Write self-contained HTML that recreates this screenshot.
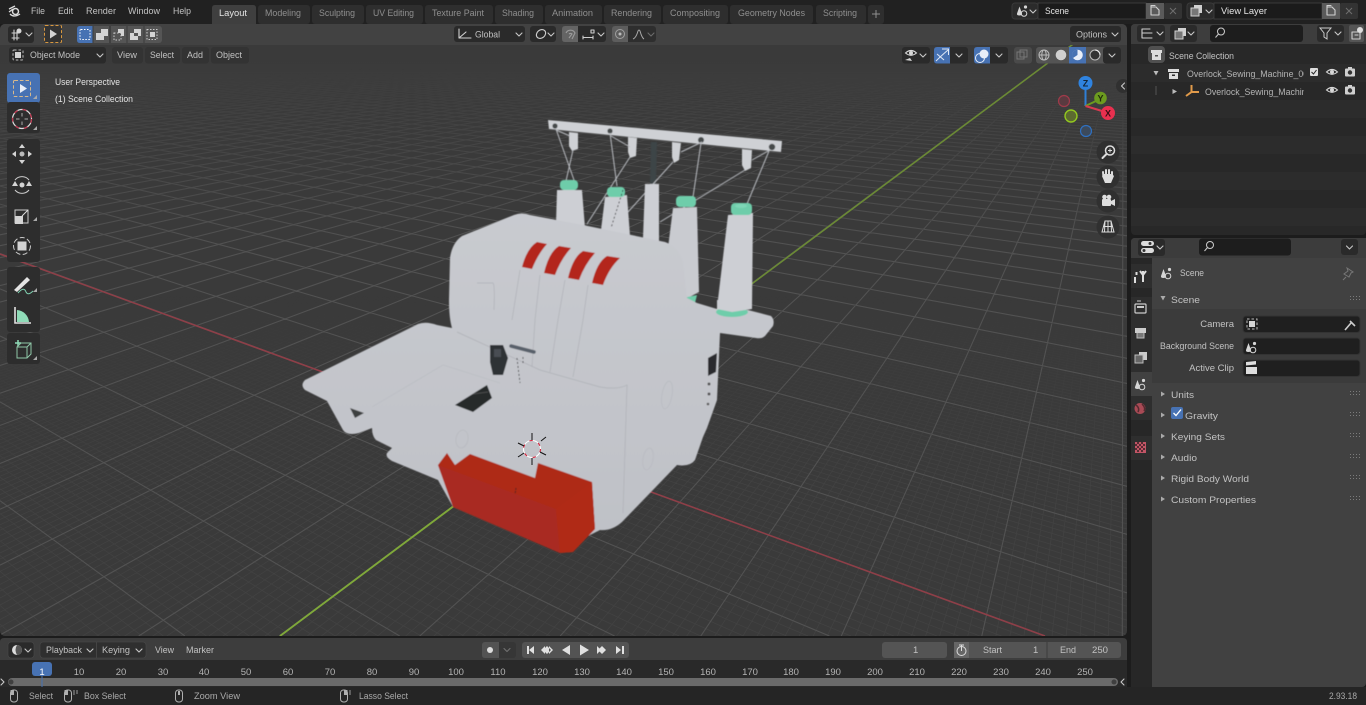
<!DOCTYPE html>
<html><head><meta charset="utf-8"><title>Blender</title>
<style>
html,body{margin:0;padding:0;background:#1c1c1c;width:1366px;height:705px;overflow:hidden}
svg{display:block;overflow:hidden}
svg.root{position:absolute;left:0;top:0}
text{font-family:"Liberation Sans",sans-serif;font-size:9.5px;fill:#c2c2c2}
.w{fill:#e4e4e4}.d{fill:#8f8f8f}.n{fill:#b4b4b4;text-anchor:middle;font-size:9.5px}
.i{fill:none;stroke:#d0d0d0;stroke-width:1.1;stroke-linecap:round;stroke-linejoin:round}
.f{fill:#d4d4d4;stroke:none}
.c{fill:none;stroke:#c8c8c8;stroke-width:1.1;stroke-linecap:round;stroke-linejoin:round}
.seam{fill:none;stroke:#aeb0b6;stroke-width:.7}
.thr{stroke:#b9bcc1;stroke-width:1;fill:none}
</style></head><body>
<svg class="root" width="1366" height="705" viewBox="0 0 1366 705" xmlns="http://www.w3.org/2000/svg">
<defs>
<path id="ch" d="M-3,-1.5 L0,1.5 L3,-1.5" class="c"/>
<g id="eye"><path d="M-5.5,0 Q0,-5 5.5,0 Q0,4.5 -5.5,0Z" fill="none" stroke="#d8d8d8" stroke-width="1.1"/><circle r="2" fill="#d8d8d8"/></g>
<g id="cam"><rect x="-5" y="-3.5" width="10" height="8" rx="1" fill="#d0d0d0"/><rect x="-2" y="-5" width="4" height="2" fill="#d0d0d0"/><circle cy="0.5" r="2.2" fill="#333"/></g>
<g id="scn"><path d="M-5,3 L-2.5,-4 L0,3Z M-5,3 Q-5.5,5 -2.5,5 Q0,5 0,3Z" fill="#d6d6d6"/><circle cx="2" cy="3" r="2.8" fill="none" stroke="#d6d6d6"/><circle cx="3.5" cy="-3.5" r="1.6" fill="#d6d6d6"/></g>
<g id="mouse"><rect x="-3.5" y="-6" width="7" height="12" rx="3" fill="none" stroke="#b0b0b0" stroke-width="1"/></g>
<g id="dots" fill="#7c7c7c"><rect x="0" y="0" width="1" height="1"/><rect x="3" y="0" width="1" height="1"/><rect x="6" y="0" width="1" height="1"/><rect x="9" y="0" width="1" height="1"/><rect x="0" y="3" width="1" height="1"/><rect x="3" y="3" width="1" height="1"/><rect x="6" y="3" width="1" height="1"/><rect x="9" y="3" width="1" height="1"/></g>
<clipPath id="vp"><rect x="0" y="24" width="1127" height="612" rx="5"/></clipPath>
<linearGradient id="fm" x1="0" y1="0" x2="0" y2="705" gradientUnits="userSpaceOnUse"><stop offset=".42" stop-color="#000"/><stop offset=".68" stop-color="#fff"/></linearGradient>
<linearGradient id="mm" x1="0" y1="0" x2="0" y2="705" gradientUnits="userSpaceOnUse"><stop offset=".08" stop-color="#000"/><stop offset=".35" stop-color="#fff"/></linearGradient>
<mask id="fmask" maskUnits="userSpaceOnUse" x="0" y="0" width="1366" height="705"><rect width="1366" height="705" fill="url(#fm)"/></mask>
<mask id="mmask" maskUnits="userSpaceOnUse" x="0" y="0" width="1366" height="705"><rect width="1366" height="705" fill="url(#mm)"/></mask>
<linearGradient id="body" x1="0" y1="200" x2="0" y2="530" gradientUnits="userSpaceOnUse"><stop offset="0" stop-color="#c9cbd0"/><stop offset="1" stop-color="#bfc1c7"/></linearGradient>
<filter id="soft" x="-5%" y="-5%" width="110%" height="110%"><feGaussianBlur stdDeviation=".5"/></filter>
</defs>

<rect width="1366" height="705" fill="#1c1c1c"/>
<rect width="1366" height="24" fill="#212121"/>
<rect y="687" width="1366" height="18" fill="#252525"/>

<!-- viewport -->
<g clip-path="url(#vp)">
<rect x="0" y="24" width="1127" height="612" fill="#3a3a3a"/>
<g mask="url(#fmask)"><g id="fine" stroke="#424242" stroke-width=".8" fill="none"></g></g>
<g mask="url(#mmask)"><g id="major" stroke="#525252" stroke-width="1.1" fill="none"></g></g>
<line x1="0" y1="254" x2="1045" y2="636" stroke="#8e3f48" stroke-width="1.6"/>
<line x1="280" y1="636" x2="1100" y2="24" stroke="#6b8a35" stroke-width="1.6"/>
<path d="M280,636 L455,505" stroke="#7fa83a" stroke-width="1.8"/>
<rect x="0" y="24" width="1127" height="21" fill="#424242"/>

<!-- machine -->
<g filter="url(#soft)">
<!-- rack -->
<polygon points="548,120 782,141 781,152 549,129" fill="#cfd1d5"/>
<polygon points="569,132 578,133 578,149 572,151 569,146" fill="#cfd1d5"/>
<polygon points="628,137 637,138 636,156 630,158 628,152" fill="#cfd1d5"/>
<polygon points="672,142 681,143 679,160 674,163 672,157" fill="#cfd1d5"/>
<polygon points="742,149 752,150 751,168 745,171 742,165" fill="#cfd1d5"/>
<circle cx="555" cy="126" r="2.6" fill="#44484a"/><circle cx="610" cy="131" r="2.6" fill="#44484a"/><circle cx="701" cy="140" r="3" fill="#44484a"/><circle cx="772" cy="147" r="3.2" fill="#44484a"/>
<polygon points="651,142 657,142 656,184 650,184" fill="#3c4546"/>
<path class="thr" d="M556,129 L574,180 M573,150 L566,181 M610,133 L617,186 M611,136 L630,147 M630,157 L587,224 M673,162 L628,212 M702,142 L681,152 M701,143 L693,197 M745,170 L660,222 M769,151 L747,204 M770,150 L752,160 M556,130 L570,136"/>
<!-- rear spools -->
<polygon points="557,190 582,190 585,228 556,224" fill="#cdcfd4"/>
<polygon points="605,197 627,195 630,236 601,230" fill="#cdcfd4"/>
<polygon points="645,184 659,184 659,244 643,238" fill="#cdcfd4"/>
<polygon points="673,208 697,207 699,292 684,300 668,248" fill="#c9cbd0"/>
<rect x="560" y="180" width="18" height="10" rx="4" fill="#6ecdaa"/>
<rect x="607" y="187" width="18" height="10" rx="4" fill="#6ecdaa"/>
<rect x="676" y="196" width="20" height="11" rx="4" fill="#6ecdaa"/>
<polygon points="683,298 697,295 695,303 683,305" fill="#6ecdaa"/>
<!-- main silhouette -->
<path d="M418,324 Q426,321 437,325 L452,328 Q449,318 449,300 L450,258 Q452,243 462,236 L514,215 Q522,212 530,215 L583,225 L665,242 Q679,247 683,262 L687,298 L697,303 L717,309 L748,310 L771,316 Q775,320 773,326 L765,336 Q762,339 756,338 L720,333 L717,400 L707,428 L703,437 L695,460 Q690,467 677,465 L622,522 Q612,531 600,530 L580,540 L453,507 L438,480 L392,461 Q385,457 387,453 L392,448 L376,440 Q372,436 372,428 L359,433 Q347,436 343,430 L327,401 L305,390 Q300,385 305,380Z" fill="url(#body)"/>
<path class="seam" d="M457,332 L540,370 L600,387 Q618,390 627,385 L623,513 M520,270 L512,320 M540,275 L535,320 L532,367 M565,280 L558,320 L550,372 M588,285 L583,320 L573,377 M477,283 L493,283 Q495,285 494,310"/>
<path d="M372,407 L443,365 L500,383" fill="none" stroke="#b8bac0" stroke-width=".6"/>
<ellipse cx="667" cy="395" rx="5" ry="14" fill="none" stroke="#b6b8be" stroke-width=".6" transform="rotate(10 667 395)"/>
<ellipse cx="648" cy="459" rx="5" ry="11" fill="none" stroke="#b6b8be" stroke-width=".6" transform="rotate(10 648 459)"/>
<ellipse cx="462" cy="439" rx="6" ry="9" fill="none" stroke="#b6b8be" stroke-width=".6" transform="rotate(10 462 439)"/>
<polygon points="350,408 364,413 355,418" fill="#3e3f40"/>
<!-- front spool -->
<polygon points="728,215 753,213 752,308 717,308" fill="#cdcfd4"/>
<ellipse cx="732" cy="312" rx="16" ry="5" fill="#6ecdaa"/>
<polygon points="717,300 752,300 752,309 732,312 717,309" fill="#cdcfd4"/>
<rect x="731" y="203" width="21" height="12" rx="4" fill="#6ecdaa"/>
<ellipse cx="741" cy="206" rx="6" ry="2" fill="#7ed6b6"/>
<!-- red tension -->
<g fill="#b3281a">
<path d="M522,267 L532,269 Q538,254 547,244 L537,242 Q527,248 522,267Z"/>
<path d="M544,273 L555,275 Q561,259 571,248 L559,246 Q549,252 544,273Z"/>
<path d="M568,278 L579,280 Q585,264 595,253 L583,251 Q573,257 568,278Z"/>
<path d="M592,283 L603,285 Q609,268 620,258 L607,256 Q597,262 592,283Z"/>
</g>
<!-- dark parts -->
<polygon points="490,345 503,345 508,358 503,375 493,375 490,362" fill="#2e3234"/>
<rect x="494" y="349" width="7" height="8" fill="#4a4e52"/>
<line x1="511" y1="346" x2="534" y2="352" stroke="#59606a" stroke-width="3.5" stroke-linecap="round"/>
<polygon points="455,405 487,385 492,398 473,412" fill="#25292a"/>
<line x1="473" y1="394" x2="488" y2="392" stroke="#555" stroke-width=".8"/>
<polygon points="708,358 717,353 716,372 708,376" fill="#2a2b2d"/>
<circle cx="709" cy="384" r="1.5" fill="#555"/><circle cx="709" cy="394" r="1.5" fill="#555"/><circle cx="708" cy="404" r="1.3" fill="#555"/>
<path d="M517,358 L520,383 M523,357 L523,363" stroke="#222" stroke-width=".8" stroke-dasharray="2 2" fill="none"/>
<path d="M623,190 L611,228" stroke="#222" stroke-width=".8" stroke-dasharray="2 2" fill="none"/>
<!-- red tray -->
<polygon points="438,465 447,453 455,465 470,454 535,478 538,463 592,482 595,529 573,552 560,553 453,507" fill="#ae2a18"/>
<polygon points="438,465 556,509 560,553 453,507" fill="#a92b20"/>
<polygon points="556,509 592,482 595,529 573,552 560,553" fill="#b02a19"/>
<line x1="516" y1="488" x2="515" y2="494" stroke="#222" stroke-width=".8" stroke-dasharray="2 1"/>
</g>
<!-- 3d cursor -->
<circle cx="532" cy="449" r="8.5" fill="none" stroke="#fff" stroke-width="1.1"/>
<circle cx="532" cy="449" r="8.5" fill="none" stroke="#d6213a" stroke-width="1.1" stroke-dasharray="3.3 6"/>
<path d="M532,433 L532,440 M532,458 L532,465 M518,443 L524,446 M540,452 L546,455 M541,441 L546,437 M518,457 L524,453" stroke="#111" stroke-width="1" fill="none"/>

<!-- gizmo -->
<path d="M1085.5,106 L1085.5,90" stroke="#2f7fd6" stroke-width="2"/>
<path d="M1085.5,106 L1096,101" stroke="#6c9b1f" stroke-width="2"/>
<path d="M1085.5,106 L1102,111" stroke="#d93a50" stroke-width="2"/>
<circle cx="1064" cy="101" r="5.5" fill="#5a3a40" stroke="#a03a4a" stroke-width="1.2"/>
<circle cx="1071" cy="116" r="6" fill="#5c6a30" stroke="#93c81f" stroke-width="1.4"/>
<circle cx="1086" cy="131" r="5.5" fill="#3c4a5c" stroke="#2f70c0" stroke-width="1.2"/>
<circle cx="1085.5" cy="83" r="7" fill="#2f83e0"/><text x="1085.5" y="86.5" text-anchor="middle" style="font-weight:bold;font-size:9px;fill:#12263a">Z</text>
<circle cx="1100.5" cy="98" r="6.3" fill="#6c9b1f"/><text x="1100.5" y="101.5" text-anchor="middle" style="font-weight:bold;font-size:9px;fill:#1d2a0a">Y</text>
<circle cx="1108" cy="113" r="7" fill="#e8304f"/><text x="1108" y="116.5" text-anchor="middle" style="font-weight:bold;font-size:9px;fill:#3a0c14">X</text>
<!-- nav buttons -->
<g fill="#303030"><circle cx="1108" cy="152" r="11.5"/><circle cx="1108" cy="177" r="11.5"/><circle cx="1108" cy="201" r="11.5"/><circle cx="1108" cy="227" r="11.5"/><circle cx="1123" cy="86" r="7"/></g>
<path d="M1124.5,83 L1121.5,86 L1124.5,89" class="c"/>
<circle cx="1110" cy="150.500" r="4.500" fill="none" stroke="#ddd" stroke-width="1.500"/><path d="M1106.500,154 L1102.500,158" stroke="#ddd" stroke-width="2" stroke-linecap="round"/><path d="M1108,150.500 H1112 M1110,148.500 V152.500" stroke="#ddd"/>
<path d="M1103.500,177 L1103,172 M1106,175 L1106,170 M1109,175 L1109,170 M1112,176 L1112,172" stroke="#ddd" stroke-width="2" stroke-linecap="round"/><path d="M1102,176 L1105,183 H1111 L1114,176 L1112,174 H1104Z" fill="#ddd"/>
<rect x="1102" y="199" width="9" height="7" rx="1" fill="#ddd"/><circle cx="1104.500" cy="197" r="2.300" fill="#ddd"/><circle cx="1109" cy="197" r="2.300" fill="#ddd"/><path d="M1111,201 L1115,199 V206 L1111,204Z" fill="#ddd"/>
<path d="M1105,221 H1111 L1114,232 H1102Z M1103.500,226.500 H1112.500 M1108,221 V232 M1105,221 L1104.500,232 M1111,221 L1111.500,232" fill="none" stroke="#ddd"/>

<!-- Header row 1 viewport -->
<rect x="8" y="26" width="26" height="17" rx="3" fill="#2a2a2a"/>
<path d="M12,33 H19 M12,38 H19 M14,30 V40 M17,31 V40" class="i"/><circle cx="19" cy="31" r="2.500" class="f"/><use href="#ch" x="29" y="34.500"/>
<rect x="44.500" y="25.500" width="17" height="17" rx="1" fill="#333" stroke="#d9983f" stroke-width="1" stroke-dasharray="3 2"/>
<path d="M50,29.500 L57,34 L50,38.500Z" class="f"/>
<rect x="77" y="26" width="85" height="17" rx="3" fill="#555"/>
<path d="M80,26 H93 V43 H80 Q77,43 77,40 V29 Q77,26 80,26Z" fill="#4772b3"/>
<line x1="110" y1="26" x2="110" y2="43" stroke="#2a2a2a"/><line x1="127" y1="26" x2="127" y2="43" stroke="#3a3a3a"/><line x1="144" y1="26" x2="144" y2="43" stroke="#3a3a3a"/><line x1="93" y1="26" x2="93" y2="43" stroke="#3a3a3a"/>
<rect x="80" y="29.500" width="10" height="10" rx="1" fill="none" stroke="#fff" stroke-dasharray="1.500 1.500"/>
<path d="M101,29 H108 V36 H104 V40 H96 V33 H101Z" class="f"/>
<rect x="114" y="33" width="7" height="7" fill="none" stroke="#ccc" stroke-dasharray="1.500 1.500"/><path d="M118,29 H124 V36 H121 V33 H118Z" class="f"/>
<path d="M134,29 H141 V36 H138 V33 H134Z M130,33 H134 V36 H138 V40 H130Z" class="f"/>
<rect x="147" y="29.500" width="10" height="10" fill="none" stroke="#ccc" stroke-dasharray="1.500 1.500"/><rect x="150" y="32" width="5" height="5" class="f"/>

<!-- global etc -->
<rect x="454" y="26" width="71" height="16" rx="3" fill="#2a2a2a"/>
<path d="M459,29 V38 H471 M459,38 L466,32" class="i"/><text x="475" y="37.500" textLength="25" lengthAdjust="spacingAndGlyphs">Global</text><use href="#ch" x="519" y="34.500"/>
<rect x="530" y="26" width="26" height="16" rx="3" fill="#2a2a2a"/>
<ellipse cx="541" cy="34" rx="5" ry="4" class="i" transform="rotate(-40 541 34)"/><use href="#ch" x="551" y="34.500"/>
<rect x="562" y="26" width="44" height="16" rx="3" fill="#2a2a2a"/><path d="M565,26 H578 V42 H565 Q562,42 562,39 V29 Q562,26 565,26Z" fill="#646464"/>
<path d="M566,33 A5,5 0 0 1 575,33 L572,39 M569,34 A2.500,2.500 0 0 1 572,34 L569,38" fill="none" stroke="#9b9b9b" stroke-width="1.100"/>
<path d="M583,36 V39 M593,36 V39 M583,37.500 H593 M591,30 h3 v3 h-3z" class="i"/><use href="#ch" x="601" y="34.500"/>
<rect x="612" y="26" width="44" height="16" rx="3" fill="#2e2e2e"/><path d="M615,26 H628 V42 H615 Q612,42 612,39 V29 Q612,26 615,26Z" fill="#5d5d5d"/>
<circle cx="620" cy="34" r="4.500" fill="none" stroke="#a0a0a0"/><circle cx="620" cy="34" r="1.500" fill="#bbb"/>
<path d="M633,39 Q636,38 638,31 Q639,29 640,31 Q642,38 644,39" fill="none" stroke="#aaa"/><use href="#ch" x="651" y="34.500" opacity=".4"/>

<rect x="1070" y="26" width="51" height="16" rx="3" fill="#2a2a2a"/><text x="1076" y="37.500" textLength="31" lengthAdjust="spacingAndGlyphs">Options</text><use href="#ch" x="1115" y="34.500"/>

<!-- header row 2 -->
<rect x="9" y="47" width="97" height="16.500" rx="3" fill="#2a2a2a"/>
<rect x="13" y="50" width="10" height="10" rx="1" fill="none" stroke="#bbb" stroke-dasharray="2.500 2"/><rect x="15" y="52" width="6" height="6" class="f"/>
<text x="30" y="58" textLength="50" lengthAdjust="spacingAndGlyphs">Object Mode</text><use href="#ch" x="100" y="55.500"/>
<rect x="112" y="47" width="31" height="16.500" rx="3" fill="#333"/><text x="117" y="58" textLength="20" lengthAdjust="spacingAndGlyphs">View</text>
<rect x="145" y="47" width="35" height="16.500" rx="3" fill="#333"/><text x="150" y="58" textLength="24" lengthAdjust="spacingAndGlyphs">Select</text>
<rect x="182" y="47" width="27" height="16.500" rx="3" fill="#333"/><text x="187" y="58" textLength="16" lengthAdjust="spacingAndGlyphs">Add</text>
<rect x="211" y="47" width="38" height="16.500" rx="3" fill="#333"/><text x="216" y="58" textLength="26" lengthAdjust="spacingAndGlyphs">Object</text>

<rect x="902" y="47" width="28" height="16.500" rx="3" fill="#2a2a2a"/><use href="#eye" x="911" y="53"/><path d="M905,60 l5,-2 l2,3z" class="f"/><use href="#ch" x="923" y="55.500"/>
<rect x="934" y="47" width="34" height="16.500" rx="3" fill="#2a2a2a"/><path d="M937,47 H950 V63.500 H937 Q934,63.500 934,60.500 V50 Q934,47 937,47Z" fill="#4772b3"/><path d="M936,61 Q941,56 948,50 M942,49 H948.500 V55 M937,54 L944,60" fill="none" stroke="#dfe8f5"/><use href="#ch" x="959" y="55.500"/>
<rect x="974" y="47" width="34" height="16.500" rx="3" fill="#2a2a2a"/><path d="M977,47 H990 V63.500 H977 Q974,63.500 974,60.500 V50 Q974,47 977,47Z" fill="#4772b3"/><circle cx="984" cy="54" r="4.500" fill="#e8eef8"/><circle cx="980" cy="58" r="4.500" fill="none" stroke="#e8eef8"/><use href="#ch" x="999" y="55.500"/>
<rect x="1014" y="47" width="18" height="16.500" rx="3" fill="#4a4a4a"/><rect x="1017" y="52" width="7" height="7" fill="none" stroke="#777"/><rect x="1020" y="50" width="7" height="7" fill="none" stroke="#777"/>
<rect x="1036" y="47" width="85" height="16.500" rx="3" fill="#545454"/><rect x="1103" y="47" width="18" height="16.500" rx="3" fill="#2a2a2a"/><rect x="1069" y="47" width="17" height="16.500" fill="#4772b3"/>
<circle cx="1044" cy="55" r="5" fill="none" stroke="#bbb"/><ellipse cx="1044" cy="55" rx="2.200" ry="5" fill="none" stroke="#bbb"/><path d="M1039,55 H1049" stroke="#bbb"/>
<circle cx="1061" cy="55" r="5.300" fill="#d0d0d0"/>
<circle cx="1077.500" cy="55" r="5.300" fill="#e8eef8"/><path d="M1077.500,49.700 V55 L1073,58 A5.300,5.300 0 0 1 1077.500,49.700Z" fill="#4772b3"/>
<circle cx="1095" cy="55" r="5" fill="#333" stroke="#bbb"/><path d="M1095,50 A5,5 0 0 1 1100,55" stroke="#eee" fill="none"/>
<use href="#ch" x="1112" y="55.500"/>

<!-- overlay texts -->
<text x="55" y="85" class="w" textLength="65" lengthAdjust="spacingAndGlyphs">User Perspective</text>
<text x="55" y="102" class="w" textLength="78" lengthAdjust="spacingAndGlyphs">(1) Scene Collection</text>

<!-- tool shelf -->
<rect x="7" y="73" width="33" height="30" rx="3" fill="#4772b3"/>
<rect x="7" y="102" width="33" height="31" rx="3" fill="#2d2d2d"/>
<rect x="7" y="139" width="33" height="123" rx="3" fill="#2d2d2d"/>
<rect x="7" y="267" width="33" height="65" rx="3" fill="#2d2d2d"/>
<rect x="7" y="333" width="33" height="31" rx="3" fill="#2d2d2d"/>
<rect x="13.500" y="80.500" width="17" height="16" rx="1" fill="none" stroke="#d9b98a" stroke-width="1" stroke-dasharray="3.500 2"/>
<path d="M20,84 L27,88.500 L20,93Z" fill="#e8eef8"/>
<circle cx="22" cy="119" r="9.500" fill="none" stroke="#ddd" stroke-width="1.200"/><circle cx="22" cy="119" r="9.500" fill="none" stroke="#c0304a" stroke-width="1.200" stroke-dasharray="4 5"/>
<path d="M22,113 V116.500 M22,121.500 V125 M16,119 H19.500 M24.500,119 H28" stroke="#aaa"/>
<path d="M22,144 L19,148 H25Z M22,164 L19,160 H25Z M12,154 L16,151 V157Z M32,154 L28,151 V157Z" class="f"/><circle cx="22" cy="154" r="2.500" fill="#bbb"/>
<path d="M15,180 A9,9 0 0 1 29,180 M15,190 A9,9 0 0 0 29,190" fill="none" stroke="#ccc"/><circle cx="22" cy="185" r="2.500" class="f"/><path d="M12,186 L18,186 L15,181Z M26,186 L32,186 L29,181Z" class="f"/>
<rect x="15" y="210" width="13" height="13" fill="none" stroke="#ccc"/><rect x="15" y="216" width="8" height="8" class="f"/><path d="M22,216 L28,210" stroke="#ddd"/>
<circle cx="22" cy="246" r="8.500" fill="none" stroke="#ccc" stroke-dasharray="5 2.500"/><rect x="17.500" y="241.500" width="9" height="9" class="f"/>
<path d="M14,290 L27,277 L30,280 L17,292Z" fill="#e4e4e4"/><path d="M18,293 Q24,286 26,292 Q28,296 33,291" fill="none" stroke="#7fd0b0"/>
<path d="M15,307 V323 H31" fill="none" stroke="#e0e0e0" stroke-width="1.600"/><path d="M17,322 V310 A13,13 0 0 1 29,322Z" fill="#8fdcb8"/>
<path d="M15,343 H21 M18,340 V346" stroke="#8fdcb8" stroke-width="1.500"/>
<path d="M17,347 L21,343 H31 V354 L27,358 H17Z M17,347 H27 V358 M27,347 L31,343" fill="none" stroke="#8fc8a8"/>
<path d="M37,99 L37,95 L33,99Z M37,130 L37,126 L33,130Z M37,221 L37,217 L33,221Z M37,292 L37,288 L33,292Z M37,360 L37,356 L33,360Z" fill="#aaa"/>
</g>

<!-- TOP BAR -->
<circle cx="15.500" cy="11.500" r="3" fill="none" stroke="#ddd" stroke-width="1.500"/><path d="M9,9 L15,6 M9,12 L13,9 M10,14 Q14,18 20,14" fill="none" stroke="#ddd" stroke-width="1.300"/>
<text x="31" y="14" textLength="14" lengthAdjust="spacingAndGlyphs">File</text>
<text x="58" y="14" textLength="15" lengthAdjust="spacingAndGlyphs">Edit</text>
<text x="86" y="14" textLength="30" lengthAdjust="spacingAndGlyphs">Render</text>
<text x="128" y="14" textLength="32" lengthAdjust="spacingAndGlyphs">Window</text>
<text x="173" y="14" textLength="18" lengthAdjust="spacingAndGlyphs">Help</text>
<g fill="#2e2e2e">
<path d="M212,24 V8 Q212,5 215,5 H253 Q256,5 256,8 V24Z" fill="#3f3f3f"/>
<rect x="258" y="5" width="52" height="19" rx="3"/><rect x="312" y="5" width="52" height="19" rx="3"/><rect x="366" y="5" width="57" height="19" rx="3"/><rect x="425" y="5" width="68" height="19" rx="3"/><rect x="495" y="5" width="48" height="19" rx="3"/><rect x="545" y="5" width="57" height="19" rx="3"/><rect x="604" y="5" width="57" height="19" rx="3"/><rect x="663" y="5" width="65" height="19" rx="3"/><rect x="730" y="5" width="83" height="19" rx="3"/><rect x="816" y="5" width="50" height="19" rx="3"/><rect x="868" y="5" width="16" height="19" rx="3"/>
</g>
<g class="tabs">
<text x="219" y="16" class="w" textLength="28" lengthAdjust="spacingAndGlyphs">Layout</text>
<text x="265" y="16" class="d" textLength="36" lengthAdjust="spacingAndGlyphs">Modeling</text>
<text x="319" y="16" class="d" textLength="36" lengthAdjust="spacingAndGlyphs">Sculpting</text>
<text x="373" y="16" class="d" textLength="41" lengthAdjust="spacingAndGlyphs">UV Editing</text>
<text x="432" y="16" class="d" textLength="52" lengthAdjust="spacingAndGlyphs">Texture Paint</text>
<text x="502" y="16" class="d" textLength="32" lengthAdjust="spacingAndGlyphs">Shading</text>
<text x="552" y="16" class="d" textLength="41" lengthAdjust="spacingAndGlyphs">Animation</text>
<text x="611" y="16" class="d" textLength="41" lengthAdjust="spacingAndGlyphs">Rendering</text>
<text x="670" y="16" class="d" textLength="50" lengthAdjust="spacingAndGlyphs">Compositing</text>
<text x="738" y="16" class="d" textLength="67" lengthAdjust="spacingAndGlyphs">Geometry Nodes</text>
<text x="823" y="16" class="d" textLength="34" lengthAdjust="spacingAndGlyphs">Scripting</text>
</g>
<path d="M876,10 V18 M872,14 H880" stroke="#8f8f8f" fill="none"/>

<rect x="1012" y="3" width="26" height="16" rx="3" fill="#2b2b2b" stroke="#3a3a3a"/><use href="#scn" x="1022" y="10.500"/><use href="#ch" x="1033" y="11.500"/>
<rect x="1038" y="3" width="108" height="16" fill="#1b1b1b" stroke="#3a3a3a"/><text x="1045" y="14" class="w" textLength="24" lengthAdjust="spacingAndGlyphs">Scene</text>
<rect x="1146" y="3" width="18" height="16" fill="#5a5a5a"/><rect x="1164" y="3" width="18" height="16" rx="2" fill="#333"/>
<path d="M1151,7 H1156 L1159,10 V15 H1151Z M1151,7 V5.500 H1155" class="i"/><path d="M1170,8 L1176,14 M1176,8 L1170,14" stroke="#6e6e6e"/>
<rect x="1187" y="3" width="27" height="16" rx="3" fill="#2b2b2b" stroke="#3a3a3a"/><rect x="1194" y="5" width="8" height="8" fill="#d0d0d0"/><rect x="1191" y="8" width="8" height="8" fill="#777" stroke="#d0d0d0"/><use href="#ch" x="1209" y="11.500"/>
<rect x="1214" y="3" width="108" height="16" fill="#1b1b1b" stroke="#3a3a3a"/><text x="1221" y="14" class="w" textLength="46" lengthAdjust="spacingAndGlyphs">View Layer</text>
<rect x="1322" y="3" width="18" height="16" fill="#5a5a5a"/><rect x="1340" y="3" width="18" height="16" rx="2" fill="#333"/>
<path d="M1327,7 H1332 L1335,10 V15 H1327Z M1327,7 V5.500 H1331" class="i"/><path d="M1346,8 L1352,14 M1352,8 L1346,14" stroke="#6e6e6e"/>

<!-- OUTLINER -->
<rect x="1131" y="24" width="235" height="211" rx="4" fill="#282828"/>
<path d="M1131,44 V28 Q1131,24 1135,24 H1366 V44Z" fill="#3d3d3d"/>
<g fill="#2c2c2c"><rect x="1131" y="64" width="235" height="18"/><rect x="1131" y="100" width="235" height="18"/><rect x="1131" y="136" width="235" height="18"/><rect x="1131" y="172" width="235" height="18"/><rect x="1131" y="208" width="235" height="18"/></g>
<rect x="1137" y="25" width="28" height="17" rx="3" fill="#2a2a2a"/><path d="M1142,29 V38 H1152 M1142,33 H1152 M1142,29 H1150" class="i"/><use href="#ch" x="1160" y="33.500"/>
<rect x="1170" y="25" width="27" height="17" rx="3" fill="#2a2a2a"/><rect x="1178" y="28" width="8" height="8" fill="#d0d0d0"/><rect x="1175" y="31" width="8" height="8" fill="#777" stroke="#d0d0d0"/><use href="#ch" x="1191" y="33.500"/>
<rect x="1210" y="25" width="93" height="17" rx="3" fill="#1d1d1d"/><circle cx="1221" cy="31.500" r="3.500" fill="none" stroke="#ccc"/><path d="M1218.500,34 L1215.500,37.500" stroke="#ccc"/>
<rect x="1317" y="25" width="27" height="17" rx="3" fill="#2a2a2a"/><path d="M1320,28 H1331 L1327,33 V39 L1324,37 V33Z" fill="none" stroke="#ccc"/><use href="#ch" x="1338" y="33.500"/>
<rect x="1349" y="25" width="15" height="17" rx="2" fill="#555"/><path d="M1352,32 H1360 V39 H1352Z M1355,35 H1358" class="i"/><circle cx="1360" cy="30" r="3" fill="#ddd"/>
<rect x="1148" y="46" width="17" height="17" rx="4" fill="#505050"/><path d="M1151,50 H1162 V53 H1151Z M1152,53 V60 H1161 V53 M1155,55.500 H1158" fill="#dcdcdc"/><rect x="1155" y="55" width="3" height="1.500" fill="#505050"/>
<text x="1169" y="59" textLength="65" lengthAdjust="spacingAndGlyphs">Scene Collection</text>
<path d="M1153.500,71 H1158.500 L1156,75.500Z" fill="#bbb"/>
<path d="M1168,69 H1179 V72 H1168Z M1169,73 H1178 V79 H1169Z" fill="#dcdcdc"/><rect x="1172" y="74.500" width="3" height="1.500" fill="#2c2c2c"/>
<svg x="1187" y="64" width="117" height="18" viewBox="0 0 117 18"><text x="0" y="13" style="fill:#b4b4b4" textLength="126" lengthAdjust="spacingAndGlyphs">Overlock_Sewing_Machine_001</text></svg>
<rect x="1310" y="68" width="8" height="8" rx="1" fill="#ddd"/><path d="M1311.500,72 L1313.500,74 L1316.500,70" stroke="#222" fill="none"/>
<use href="#eye" x="1332" y="72"/><use href="#cam" x="1350" y="72"/>
<line x1="1156" y1="86" x2="1156" y2="95" stroke="#555"/>
<path d="M1172.500,89 L1177,91.500 L1172.500,94Z" fill="#bbb"/>
<path d="M1191.500,85 V92 L1186,96 M1191.500,92 H1199" fill="none" stroke="#e09a4a" stroke-width="2"/>
<svg x="1205" y="82" width="99" height="18" viewBox="0 0 99 18"><text x="0" y="13" style="fill:#b4b4b4" textLength="126" lengthAdjust="spacingAndGlyphs">Overlock_Sewing_Machine_001</text></svg>
<use href="#eye" x="1332" y="90"/><use href="#cam" x="1350" y="90"/>

<!-- PROPERTIES -->
<rect x="1131" y="238" width="235" height="449" rx="4" fill="#414141"/>
<path d="M1131,258 V242 Q1131,238 1135,238 H1366 V258Z" fill="#3c3c3c"/>
<rect x="1131" y="258" width="21" height="429" fill="#272727"/>
<rect x="1138" y="239" width="27" height="17" rx="3" fill="#2a2a2a"/><rect x="1141" y="241" width="13" height="5" rx="2.500" fill="#ddd"/><rect x="1141" y="248" width="13" height="5" rx="2.500" fill="#ddd"/><circle cx="1150" cy="243.500" r="1.500" fill="#333"/><circle cx="1144" cy="250.500" r="1.500" fill="#333"/><use href="#ch" x="1160" y="247.500"/>
<rect x="1199" y="238.500" width="92" height="17" rx="3" fill="#1d1d1d"/><circle cx="1210" cy="245" r="3.500" fill="none" stroke="#ccc"/><path d="M1207.500,247.500 L1204.500,251" stroke="#ccc"/>
<rect x="1341" y="239" width="17" height="16" rx="3" fill="#2a2a2a"/><use href="#ch" x="1349.500" y="247.500"/>
<!-- tabs -->
<rect x="1131" y="264" width="21" height="24" fill="#2e2e2e"/><rect x="1131" y="297" width="21" height="123" fill="#2e2e2e"/><rect x="1131" y="436" width="21" height="24" fill="#2e2e2e"/>
<rect x="1131" y="372" width="21" height="24" fill="#414141"/>
<path d="M1135,283 V277 M1136.500,272 V275 M1143,271 L1143,282 M1140,271 L1143,275 L1146,271" stroke="#ddd" stroke-width="2" fill="none"/>
<rect x="1135" y="304" width="11" height="9" rx="1" fill="none" stroke="#ccc" stroke-width="1.200"/><path d="M1137,301 H1141" stroke="#ccc"/><rect x="1137" y="306" width="7" height="2" fill="#ccc"/>
<path d="M1135,328 H1146 V333 H1135Z" fill="#ccc"/><path d="M1137,333 V338 H1144 V333" fill="#777" stroke="#bbb"/>
<rect x="1139" y="352" width="8" height="8" fill="#ccc"/><rect x="1135" y="355" width="8" height="8" fill="#666" stroke="#bbb"/>
<use href="#scn" x="1140" y="384"/>
<circle cx="1140" cy="408.500" r="5.500" fill="#a84a55"/><path d="M1136,405 Q1140,408 1138,412 M1142,404 Q1146,408 1144,411" stroke="#552a30" fill="none" stroke-width="1.500"/>
<g fill="#c25566"><rect x="1135" y="442" width="11" height="11"/></g><g fill="#552c33"><rect x="1137" y="442" width="2" height="2"/><rect x="1141" y="442" width="2" height="2"/><rect x="1135" y="444" width="2" height="2"/><rect x="1139" y="444" width="2" height="2"/><rect x="1143" y="444" width="2" height="2"/><rect x="1137" y="446" width="2" height="2"/><rect x="1141" y="446" width="2" height="2"/><rect x="1135" y="448" width="2" height="2"/><rect x="1139" y="448" width="2" height="2"/><rect x="1143" y="448" width="2" height="2"/><rect x="1137" y="450" width="2" height="2"/><rect x="1141" y="450" width="2" height="2"/></g>
<!-- content -->
<use href="#scn" x="1166" y="273"/><text x="1180" y="276" textLength="24" lengthAdjust="spacingAndGlyphs">Scene</text>
<path d="M1346,277 L1343,280 M1347,268 L1353,272 L1351,273 L1349,277 L1344,274 L1348,271Z" fill="none" stroke="#777"/>
<rect x="1152" y="309" width="214" height="74" fill="#3b3b3b"/>
<path d="M1160.500,296 H1165.500 L1163,300.500Z" fill="#aaa"/><text x="1171" y="303" textLength="29" lengthAdjust="spacingAndGlyphs">Scene</text><use href="#dots" x="1350" y="296"/>
<text x="1234" y="327" text-anchor="end">Camera</text><text x="1234" y="349" text-anchor="end" textLength="74" lengthAdjust="spacingAndGlyphs">Background Scene</text><text x="1234" y="371" text-anchor="end">Active Clip</text>
<rect x="1243" y="316" width="117" height="16.500" rx="3" fill="#1f1f1f" stroke="#333"/><rect x="1243" y="338" width="117" height="16.500" rx="3" fill="#1f1f1f" stroke="#333"/><rect x="1243" y="360" width="117" height="16.500" rx="3" fill="#1f1f1f" stroke="#333"/>
<rect x="1247" y="319" width="10" height="10" fill="none" stroke="#bbb" stroke-dasharray="2.500 2"/><rect x="1249" y="321" width="6" height="6" class="f"/>
<path d="M1345,330 L1351,323 M1350,321 L1355,326" stroke="#ccc" stroke-width="1.600"/><use href="#scn" x="1251" y="347"/>
<path d="M1246,367 H1257 V372 H1246Z" fill="#ddd"/><path d="M1246,362 L1256,361 L1256,364.500 L1246,365.500Z" fill="#ddd"/><rect x="1246" y="372" width="11" height="2" fill="#ddd"/>
<g fill="#aaa"><path d="M1161,391.500 L1165,394 L1161,396.500Z"/><path d="M1161,412.500 L1165,415 L1161,417.500Z"/><path d="M1161,433.500 L1165,436 L1161,438.500Z"/><path d="M1161,454.500 L1165,457 L1161,459.500Z"/><path d="M1161,475.500 L1165,478 L1161,480.500Z"/><path d="M1161,496.500 L1165,499 L1161,501.500Z"/></g>
<text x="1171" y="398" textLength="23" lengthAdjust="spacingAndGlyphs">Units</text>
<rect x="1171" y="407" width="12" height="12" rx="2" fill="#4772b3"/><path d="M1173.500,413 L1176,415.500 L1181,409.500" stroke="#fff" stroke-width="1.300" fill="none"/>
<text x="1185" y="419" textLength="33" lengthAdjust="spacingAndGlyphs">Gravity</text>
<text x="1171" y="440" textLength="54" lengthAdjust="spacingAndGlyphs">Keying Sets</text>
<text x="1171" y="461" textLength="26" lengthAdjust="spacingAndGlyphs">Audio</text>
<text x="1171" y="482" textLength="78" lengthAdjust="spacingAndGlyphs">Rigid Body World</text>
<text x="1171" y="503" textLength="85" lengthAdjust="spacingAndGlyphs">Custom Properties</text>
<use href="#dots" x="1350" y="391"/><use href="#dots" x="1350" y="412"/><use href="#dots" x="1350" y="433"/><use href="#dots" x="1350" y="454"/><use href="#dots" x="1350" y="475"/><use href="#dots" x="1350" y="496"/>

<!-- TIMELINE -->
<path d="M0,660 V642 Q0,638 4,638 H1123 Q1127,638 1127,642 V660Z" fill="#3d3d3d"/>
<rect x="0" y="660" width="1127" height="27" fill="#292929"/>
<rect x="8" y="642" width="26" height="16" rx="3" fill="#2a2a2a" stroke="#4a4a4a" stroke-width=".6"/><circle cx="17" cy="650" r="5" fill="#ddd"/><path d="M17,645 A5,5 0 0 1 17,655 Q14,650 17,645Z" fill="#555"/><use href="#ch" x="28" y="650.500"/>
<rect x="40" y="642" width="106" height="16" rx="3" fill="#2f2f2f" stroke="#4a4a4a" stroke-width=".6"/><line x1="96.500" y1="642" x2="96.500" y2="658" stroke="#444"/>
<text x="46" y="653" textLength="36" lengthAdjust="spacingAndGlyphs">Playback</text><use href="#ch" x="90" y="650.500"/>
<text x="102" y="653" textLength="28" lengthAdjust="spacingAndGlyphs">Keying</text><use href="#ch" x="139" y="650.500"/>
<text x="155" y="653" textLength="19" lengthAdjust="spacingAndGlyphs">View</text><text x="186" y="653" textLength="28" lengthAdjust="spacingAndGlyphs">Marker</text>
<rect x="482" y="642" width="34" height="16" rx="3" fill="#363636"/><path d="M482,645 Q482,642 485,642 H499 V658 H485 Q482,658 482,655Z" fill="#535353"/><circle cx="490" cy="650" r="3" fill="#ddd"/><use href="#ch" x="507" y="650" opacity=".4"/>
<rect x="522" y="642" width="107" height="16" rx="3" fill="#535353"/>
<g fill="#e0e0e0"><path d="M527,646 H529 V654 H527Z M534,646 V654 L529,650Z"/><path d="M541,650 L545,646 V654Z M547,646 L551,650 L547,654 L543,650Z M553,650 L549,646 V654Z"/><path d="M570,645 V655 L562,650Z"/><path d="M580,644.500 L589,650 L580,655.500Z"/><path d="M597,646 L601,650 L597,654Z M602,646 L606,650 L602,654 L598,650Z"/><path d="M616,646 V654 L621,650Z M622,646 H624 V654 H622Z"/></g>
<rect x="882" y="642" width="65" height="16" rx="3" fill="#545454"/><text x="913" y="653">1</text>
<rect x="954" y="642" width="167" height="16" rx="3" fill="#545454"/><rect x="954" y="642" width="15" height="16" fill="#666"/><line x1="1047" y1="642" x2="1047" y2="658" stroke="#3d3d3d"/>
<circle cx="961.500" cy="651" r="4.500" fill="none" stroke="#ddd"/><path d="M959,645 H964 M961.500,645 V651" stroke="#ddd" fill="none"/>
<text x="983" y="653" textLength="19" lengthAdjust="spacingAndGlyphs">Start</text><text x="1033" y="653">1</text><text x="1060" y="653" textLength="16" lengthAdjust="spacingAndGlyphs">End</text><text x="1092" y="653" textLength="16" lengthAdjust="spacingAndGlyphs">250</text>
<rect x="8" y="678" width="1110" height="8" rx="4" fill="#6a6a6a"/><circle cx="11" cy="682" r="2.500" fill="#3f3f3f"/><circle cx="1114" cy="682" r="2.500" fill="#3f3f3f"/>
<path d="M1,679 L4,682 L1,685" class="c"/><path d="M1124,679 L1121,682 L1124,685" class="c"/>
<line x1="42" y1="674" x2="42" y2="687" stroke="#4772b3"/>
<rect x="32" y="662" width="20" height="14" rx="3" fill="#4772b3"/><text x="42" y="675" class="n" style="fill:#fff">1</text>
<g class="nums">
<text class="n" x="79" y="675">10</text><text class="n" x="121" y="675">20</text><text class="n" x="163" y="675">30</text><text class="n" x="204" y="675">40</text><text class="n" x="246" y="675">50</text><text class="n" x="288" y="675">60</text><text class="n" x="330" y="675">70</text><text class="n" x="372" y="675">80</text><text class="n" x="414" y="675">90</text><text class="n" x="456" y="675">100</text><text class="n" x="498" y="675">110</text><text class="n" x="540" y="675">120</text><text class="n" x="582" y="675">130</text><text class="n" x="624" y="675">140</text><text class="n" x="666" y="675">150</text><text class="n" x="708" y="675">160</text><text class="n" x="750" y="675">170</text><text class="n" x="791" y="675">180</text><text class="n" x="833" y="675">190</text><text class="n" x="875" y="675">200</text><text class="n" x="917" y="675">210</text><text class="n" x="959" y="675">220</text><text class="n" x="1001" y="675">230</text><text class="n" x="1043" y="675">240</text><text class="n" x="1085" y="675">250</text>
</g>

<!-- STATUS -->
<use href="#mouse" x="14" y="696"/><rect x="10.500" y="690" width="3.500" height="5" fill="#b0b0b0"/>
<text x="29" y="699" textLength="24" lengthAdjust="spacingAndGlyphs" style="fill:#aaa">Select</text>
<use href="#mouse" x="68" y="696"/><rect x="64.500" y="690" width="3.500" height="5" fill="#b0b0b0"/><path d="M74,690 V695 M77,690 V694" stroke="#999"/>
<text x="84" y="699" textLength="42" lengthAdjust="spacingAndGlyphs" style="fill:#aaa">Box Select</text>
<use href="#mouse" x="179" y="696"/><rect x="178" y="691" width="2" height="4" fill="#b0b0b0"/>
<text x="194" y="699" textLength="46" lengthAdjust="spacingAndGlyphs" style="fill:#aaa">Zoom View</text>
<use href="#mouse" x="344" y="696"/><rect x="344" y="690" width="3.500" height="5" fill="#b0b0b0"/><path d="M350,690 V695" stroke="#999"/>
<text x="359" y="699" textLength="49" lengthAdjust="spacingAndGlyphs" style="fill:#aaa">Lasso Select</text>
<text x="1329" y="699" textLength="28" lengthAdjust="spacingAndGlyphs" style="fill:#aaa">2.93.18</text>
</svg>
<script>
(function(){
var VX=[-676,6],VY=[1123,6],O=[531,448],a=.0548,b=.0838;
var L=0,R=1127,T=24,B=636;
function P(u,v){var k=a*u,m=b*v,w=1+k+m;return[(O[0]+k*VX[0]+m*VY[0])/w,(O[1]+k*VX[1]+m*VY[1])/w];}
function ray(V,p){
  var dx=(p[0]-V[0])*40,dy=(p[1]-V[1])*40,t0=0,t1=1;
  var ps=[-dx,dx,-dy,dy],qs=[V[0]-L,R-V[0],V[1]-T,B-V[1]];
  for(var i=0;i<4;i++){
    if(ps[i]===0){if(qs[i]<0)return '';continue;}
    var r=qs[i]/ps[i];
    if(ps[i]<0){if(r>t1)return '';if(r>t0)t0=r;}
    else{if(r<t0)return '';if(r<t1)t1=r;}
  }
  return 'M'+(V[0]+dx*t0).toFixed(1)+','+(V[1]+dy*t0).toFixed(1)+'L'+(V[0]+dx*t1).toFixed(1)+','+(V[1]+dy*t1).toFixed(1);
}
function build(step,lo,hi){
  var d='',i,u,v,n=Math.round((hi-lo)/step);
  for(i=0;i<=n;i++){
    u=lo+i*step;
    v=Math.max(0,(-1-a*u)/b+.5);
    d+=ray(VY,P(u,v));
    v=u;
    var uu=Math.max(0,(-1-b*v)/a+.5);
    d+=ray(VX,P(uu,v));
  }
  return d;
}
var NS='http://www.w3.org/2000/svg';
var p1=document.createElementNS(NS,'path');p1.setAttribute('d',build(1,-60,160));document.getElementById('major').appendChild(p1);
var p2=document.createElementNS(NS,'path');p2.setAttribute('d',build(.1,-40,30));document.getElementById('fine').appendChild(p2);
})();
</script>
</body></html>
